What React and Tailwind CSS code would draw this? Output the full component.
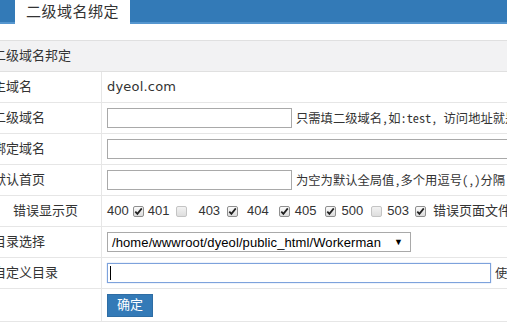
const cjk = { fontFamily: '"Liberation Sans", "Noto Sans CJK SC", sans-serif' };
const hintFont = { fontFamily: '"Noto Sans CJK SC", sans-serif' };

function Box({ on }) {
  return (
    <span
      className={`inline-flex w-[11px] h-[11px] shrink-0 items-center justify-center rounded-[2px] border ${
        on ? 'border-[#8f8f8f] bg-gradient-to-b from-[#fbfbfb] to-[#dcdcdc]' : 'border-[#c4c4c4] bg-gradient-to-b from-[#f2f2f2] to-[#dedede]'
      }`}
    >
      {on && (
        <svg width="9" height="9" viewBox="0 0 9 9">
          <path d="M1.3 4.6 L3.4 6.9 L7.8 1.4" fill="none" stroke="#222" strokeWidth="1.7" />
        </svg>
      )}
    </span>
  );
}

function Row({ label, indent, children, h = 'h-[31px]' }) {
  return (
    <div className={`flex ${h} border-b border-[#e6e6e6]`}>
      <div className="w-[102px] shrink-0 border-r border-[#e6e6e6] flex items-center overflow-hidden">
        <span className={`${indent ? 'ml-[13px]' : '-ml-[7px]'} whitespace-nowrap text-[13px] text-[#333]`}>{label}</span>
      </div>
      <div className="flex items-center pl-[5px] whitespace-nowrap">{children}</div>
    </div>
  );
}

const Input = ({ w }) => <div className={`${w} h-[20px] border border-[#a9a9a9] bg-white shrink-0`} />;

const Hint = ({ children }) => (
  <span className="ml-[4px] text-[12.3px] text-[#333] leading-none [font-feature-settings:'hwid']" style={hintFont}>
    {children}
  </span>
);

export default function App() {
  const codes = [
    ['400', true, 'ml-0', 'ml-[4px]'],
    ['401', false, 'ml-[4px]', 'ml-[7px]'],
    ['403', true, 'ml-[11px]', 'ml-[7px]'],
    ['404', true, 'ml-[9px]', 'ml-[10px]'],
    ['405', true, 'ml-[5px]', 'ml-[8px]'],
    ['500', false, 'ml-[6px]', 'ml-[8px]'],
    ['503', true, 'ml-[5px]', 'ml-[6px]'],
  ];

  return (
    <div className="w-[507px] h-[334px] overflow-hidden bg-white" style={cjk}>
      {/* 顶部标签栏 */}
      <div className="flex h-[24px] bg-[#337ab7] border-b-2 border-[#5596cf]">
        <div className="ml-[15px] w-[115px] h-[24px] bg-white flex items-center justify-center text-[15px] tracking-[0.5px] text-[#333]">
          二级域名绑定
        </div>
      </div>

      <div className="mt-[16px] h-[32px] bg-[#f2f2f3] border-y border-[#e0e0e0] flex items-center overflow-hidden">
        <span className="-ml-[7px] text-[13px] text-[#333] whitespace-nowrap">二级域名邦定</span>
      </div>

      <Row label="主域名">
        <span className="text-[13px] text-[#333] tracking-[0.2px]" style={{ fontFamily: '"DejaVu Sans", sans-serif' }}>dyeol.com</span>
      </Row>
      <Row label="二级域名">
        <Input w="w-[185px]" />
        <Hint>只需填二级域名,如:test, 访问地址就是:test.dyeol.com</Hint>
      </Row>
      <Row label="绑定域名">
        <Input w="w-[420px]" />
      </Row>
      <Row label="默认首页">
        <Input w="w-[185px]" />
        <Hint>为空为默认全局值,多个用逗号(,)分隔</Hint>
      </Row>
      <Row label="错误显示页" indent>
        <div className="flex items-center text-[13px] text-[#333]">
          {codes.map(([c, on, tm, bm]) => (
            <div key={c} className="flex items-center">
              <span className={tm}>{c}</span>
              <span className={`${bm} flex`}>
                <Box on={on} />
              </span>
            </div>
          ))}
          <span className="ml-[7px] text-[13px]">错误页面文件名</span>
        </div>
      </Row>
      <Row label="目录选择">
        <div className="w-[304px] h-[20px] border border-[#a9a9a9] bg-white flex items-center justify-between pl-[4px] pr-[7px]">
          <span className="text-[13px] tracking-[0.1px] text-black leading-none">/home/wwwroot/dyeol/public_html/Workerman</span>
          <span className="text-[9px] text-black leading-none">▼</span>
        </div>
      </Row>
      <Row label="自定义目录">
        <div className="w-[384px] h-[20px] border border-[#7da2dc] bg-white flex items-center pl-[2px] shadow-[0_0_1px_#9bb8e6]">
          <span className="w-px h-[14px] bg-black" />
        </div>
        <Hint>使用自定义目录</Hint>
      </Row>
      <Row label="" h="h-[33px]">
        <button className="w-[46px] h-[23px] bg-[#337ab7] border border-[#2e6da4] text-white text-[13px] flex items-center justify-center">
          确定
        </button>
      </Row>
    </div>
  );
}
